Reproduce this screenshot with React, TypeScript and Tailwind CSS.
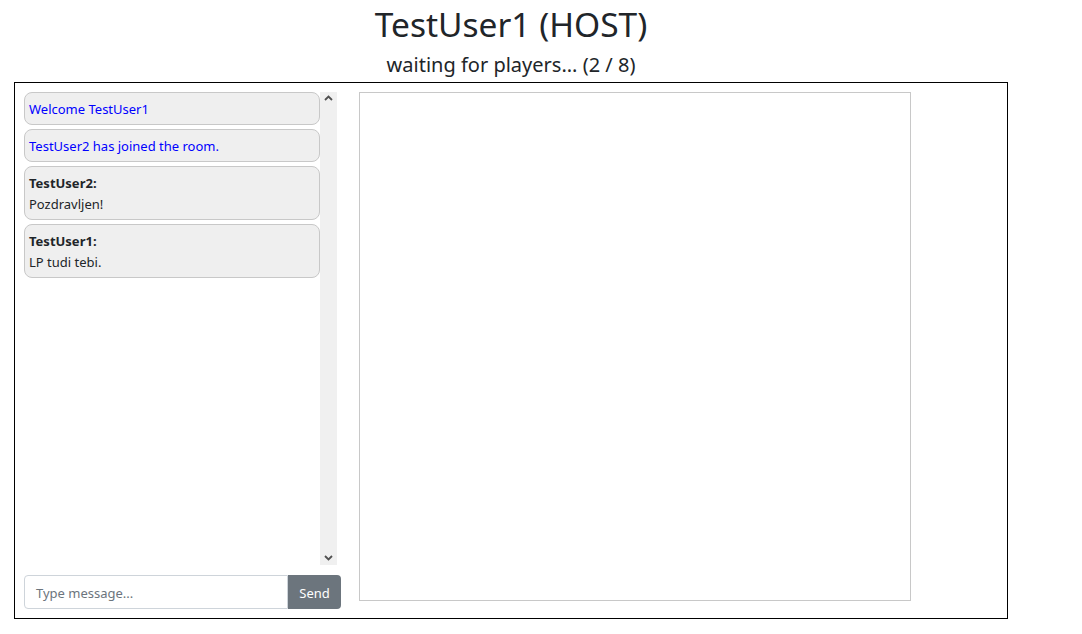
import React from "react";

const font = { fontFamily: '"Noto Sans", "Open Sans", Arial, sans-serif' };

function Up() {
  return (
    <svg width="9" height="6" viewBox="0 0 9 6" className="block">
      <path d="M1 5 L4.5 1.5 L8 5" stroke="#505050" strokeWidth="1.8" fill="none" />
    </svg>
  );
}
function Down() {
  return (
    <svg width="9" height="6" viewBox="0 0 9 6" className="block">
      <path d="M1 1 L4.5 4.5 L8 1" stroke="#505050" strokeWidth="1.8" fill="none" />
    </svg>
  );
}

export default function App() {
  return (
    <div className="w-[1082px] h-[634px] bg-white text-[#212529] overflow-hidden" style={font}>
      <div className="w-[994px] ml-[14px] flex flex-col">
        <h1 className="text-center text-[33.5px] leading-[42px] mt-[3px] font-normal">TestUser1 (HOST)</h1>
        <h4 className="text-center text-[20px] leading-[28px] mt-[6px] mb-[3px] font-normal">waiting for players... (2 / 8)</h4>
        <div className="border border-black h-[537px] flex pt-[9px] pl-[9px]">
          <div className="w-[317px] flex flex-col">
            <div className="h-[473px] flex">
              <div className="w-[296px] flex flex-col gap-[4px] text-[13px] leading-[21px]">
                <div className="bg-[#efefef] border border-[#c8c8c8] rounded-[8px] px-[4px] pt-[6px] pb-[4px] text-[#0000ff]">Welcome TestUser1</div>
                <div className="bg-[#efefef] border border-[#c8c8c8] rounded-[8px] px-[4px] pt-[6px] pb-[4px] text-[#0000ff]">TestUser2 has joined the room.</div>
                <div className="bg-[#efefef] border border-[#c8c8c8] rounded-[8px] px-[4px] pt-[6px] pb-[4px]">
                  <div className="font-bold">TestUser2:</div>
                  <div>Pozdravljen!</div>
                </div>
                <div className="bg-[#efefef] border border-[#c8c8c8] rounded-[8px] px-[4px] pt-[6px] pb-[4px]">
                  <div className="font-bold">TestUser1:</div>
                  <div>LP tudi tebi.</div>
                </div>
              </div>
              <div className="w-[17px] bg-[#f0f0f0] flex flex-col items-center justify-between pt-[3px] pb-[4px]">
                <Up />
                <Down />
              </div>
            </div>
            <div className="mt-[10px] flex h-[34px]">
              <div className="flex-1 border border-[#ced4da] rounded-l-[4px] flex items-center pl-[11px] pt-[3px] text-[13px] text-[#6c757d]">Type message...</div>
              <div className="w-[53px] bg-[#6c757d] rounded-r-[4px] text-white text-[13px] flex items-center justify-center pt-[3px]">Send</div>
            </div>
          </div>
          <div className="ml-[18px] w-[552px] h-[509px] border border-[#c8c8c8]" />
        </div>
      </div>
    </div>
  );
}
